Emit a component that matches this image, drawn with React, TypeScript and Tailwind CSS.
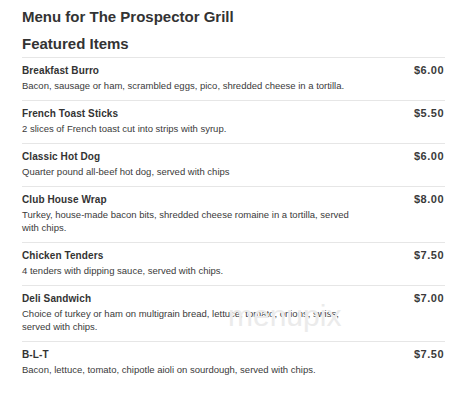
const items = [
  {
    name: "Breakfast Burro",
    price: "$6.00",
    desc: "Bacon, sausage or ham, scrambled eggs, pico, shredded cheese in a tortilla.",
  },
  {
    name: "French Toast Sticks",
    price: "$5.50",
    desc: "2 slices of French toast cut into strips with syrup.",
  },
  {
    name: "Classic Hot Dog",
    price: "$6.00",
    desc: "Quarter pound all-beef hot dog, served with chips",
  },
  {
    name: "Club House Wrap",
    price: "$8.00",
    desc: "Turkey, house-made bacon bits,  shredded cheese romaine in a tortilla, served with chips.",
  },
  {
    name: "Chicken Tenders",
    price: "$7.50",
    desc: "4 tenders with dipping sauce, served with chips.",
  },
  {
    name: "Deli Sandwich",
    price: "$7.00",
    desc: "Choice of turkey or ham on multigrain bread, lettuce, tomato, onions, swiss, served with chips.",
  },
  {
    name: "B-L-T",
    price: "$7.50",
    desc: "Bacon, lettuce, tomato, chipotle aioli on sourdough, served with chips.",
  },
];

export default function App() {
  return (
    <div className="relative w-[460px] h-[404px] bg-white overflow-hidden font-['Liberation_Sans',Arial,sans-serif] text-[#333]">
      <div className="ml-[22px] mr-[15px] pt-[7px]">
        <h1 className="text-[15px] leading-[20px] font-bold text-[#333]">Menu for The Prospector Grill</h1>
        <h2 className="mt-[7px] mb-[3px] text-[15px] leading-[20px] font-bold text-[#333]">Featured Items</h2>
        <div className="border-t border-[#e6e6e6]">
          {items.map((item, i) => (
            <div
              key={item.name}
              className={
                i < items.length - 1
                  ? "border-b border-[#e6e6e6] pt-[5px] pb-[8px]"
                  : "pt-[5px] pb-[8px]"
              }
            >
              <div className="flex justify-between items-center h-[14px]">
                <span className="text-[10px] font-bold tracking-[0.1px] text-[#333]">{item.name}</span>
                <span className="text-[11px] font-bold tracking-[0.5px] text-[#3a3a3a] mr-[1px]">{item.price}</span>
              </div>
              <p className="mt-[2px] w-[345px] text-[9.5px] leading-[13px] text-[#3a3a3a]">{item.desc}</p>
            </div>
          ))}
        </div>
      </div>
      <div className="absolute left-[228px] top-[298px] text-[30px] leading-[36px] text-[#ebebeb] pointer-events-none">
        menupix
      </div>
    </div>
  );
}
